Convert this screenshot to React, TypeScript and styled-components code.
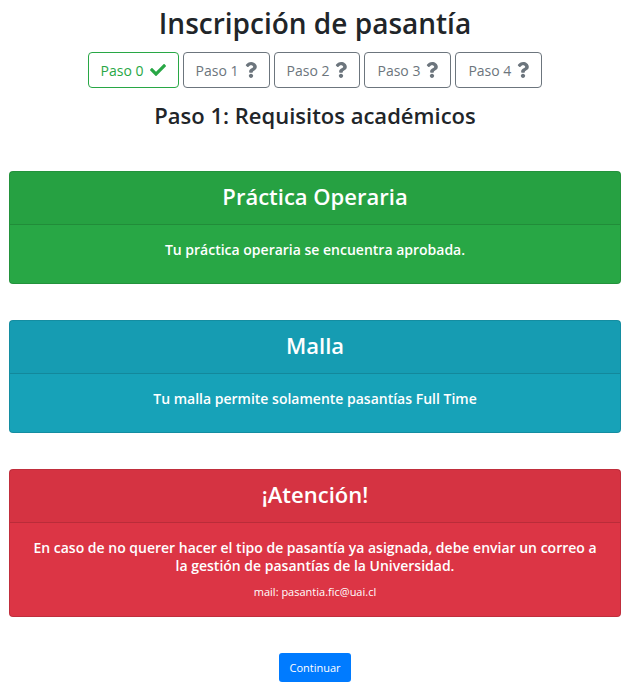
import React from 'react';
import styled, { createGlobalStyle } from 'styled-components';
import { FaCheck, FaQuestion } from 'react-icons/fa';

const GlobalStyle = createGlobalStyle`
  *, *::before, *::after { box-sizing: border-box; }
  body {
    margin: 0;
    background: #fff;
    color: #212529;
    font-family: "Segoe UI", "Open Sans", "Noto Sans", sans-serif;
    font-size: 16px;
    line-height: 24px;
  }
`;

const Page = styled.main`
  padding: 5px 10px 8px 9px;
  text-align: center;
`;

const Title = styled.h1`
  margin: 0 0 11px;
  font-size: 28px;
  font-weight: 600;
  line-height: 36px;
`;

const Steps = styled.nav`
  display: flex;
  flex-wrap: wrap;
  justify-content: center;
  gap: 4px;
`;

const StepButton = styled.button<{ $done?: boolean }>`
  display: inline-flex;
  align-items: center;
  gap: 6px;
  height: 36px;
  padding: 0 12px;
  border: 1px solid ${p => (p.$done ? '#28a745' : '#6c757d')};
  border-radius: 4px;
  background: transparent;
  color: ${p => (p.$done ? '#28a745' : '#6c757d')};
  font-family: inherit;
  font-size: 14px;
  cursor: pointer;

  svg {
    width: ${p => (p.$done ? '16px' : '12px')};
    height: 16px;
  }
`;

const Subtitle = styled.h2`
  margin: 12px 0 41px;
  font-size: 22px;
  font-weight: 600;
  line-height: 30px;
`;

const Cards = styled.div`
  display: grid;
  gap: 36px;
`;

const Card = styled.section<{ $color: string }>`
  border: 1px solid rgba(0, 0, 0, 0.125);
  border-radius: 4px;
  background: ${p => p.$color};
  color: #fff;
`;

const CardHeader = styled.h3`
  margin: 0;
  padding: 10px 20px 13px;
  border-bottom: 1px solid rgba(0, 0, 0, 0.125);
  background: rgba(0, 0, 0, 0.03);
  font-size: 22px;
  font-weight: 600;
  line-height: 29px;
`;

const CardBody = styled.div`
  padding: 16px 20px;
`;

const Message = styled.p`
  margin: 0 0 8px;
  font-size: 14px;
  font-weight: 600;
  line-height: 18px;
`;

const Mail = styled.p`
  margin: 0;
  font-size: 11px;
  line-height: 17px;
`;

const Continue = styled.button`
  margin-top: 36px;
  height: 29px;
  padding: 0 10px;
  border: 0;
  border-radius: 3px;
  background: #007bff;
  color: #fff;
  font-family: inherit;
  font-size: 11px;
  cursor: pointer;
`;

const steps = [0, 1, 2, 3, 4];

export default function App() {
  return (
    <Page>
      <GlobalStyle />
      <Title>Inscripción de pasantía</Title>
      <Steps>
        {steps.map(n => (
          <StepButton key={n} type="button" $done={n === 0}>
            Paso {n} {n === 0 ? <FaCheck /> : <FaQuestion />}
          </StepButton>
        ))}
      </Steps>
      <Subtitle>Paso 1: Requisitos académicos</Subtitle>
      <Cards>
        <Card $color="#28a745">
          <CardHeader>Práctica Operaria</CardHeader>
          <CardBody><Message>Tu práctica operaria se encuentra aprobada.</Message></CardBody>
        </Card>
        <Card $color="#17a2b8">
          <CardHeader>Malla</CardHeader>
          <CardBody><Message>Tu malla permite solamente pasantías Full Time</Message></CardBody>
        </Card>
        <Card $color="#dc3545">
          <CardHeader>¡Atención!</CardHeader>
          <CardBody>
            <Message>
              En caso de no querer hacer el tipo de pasantía ya asignada, debe enviar un correo a la
              gestión de pasantías de la Universidad.
            </Message>
            <Mail>mail: pasantia.fic@uai.cl</Mail>
          </CardBody>
        </Card>
      </Cards>
      <Continue type="button">Continuar</Continue>
    </Page>
  );
}
